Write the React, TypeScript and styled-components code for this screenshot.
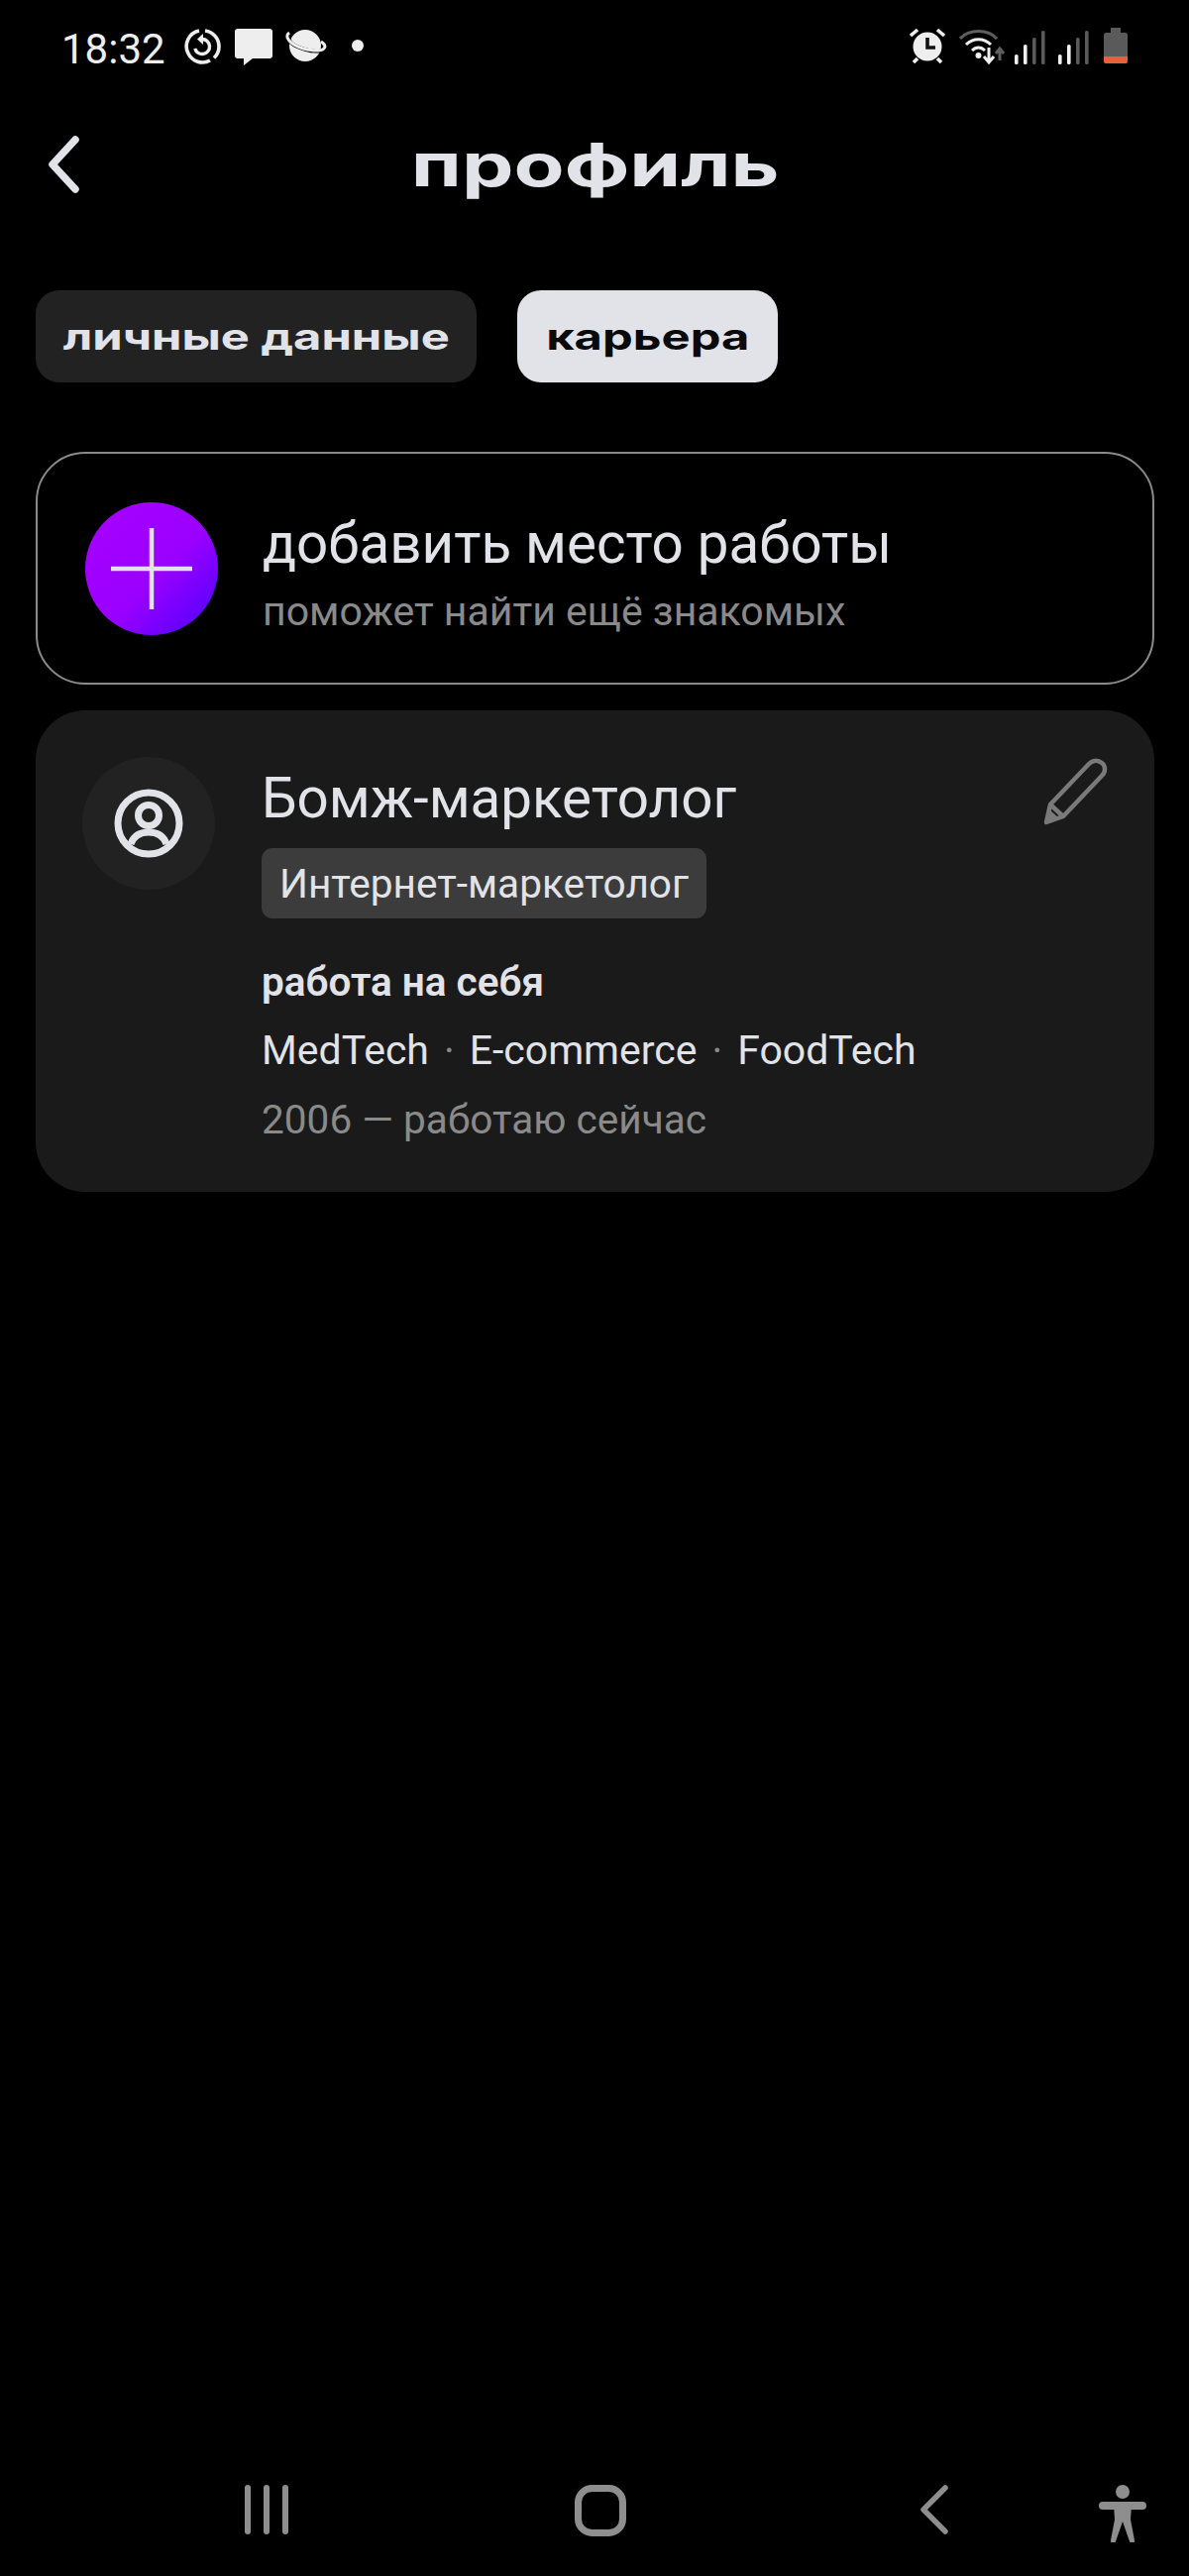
import styled, { createGlobalStyle } from "styled-components";

const GlobalStyle = createGlobalStyle`
  html, body {
    margin: 0;
    padding: 0;
    background: #000;
  }
  * {
    box-sizing: border-box;
  }
`;

const Page = styled.div`
  width: 1200px;
  height: 2600px;
  background: #000;
  color: #e1e3e8;
  font-family: Roboto, "Noto Sans", sans-serif;
  display: flex;
  flex-direction: column;
`;

const StatusBar = styled.div`
  height: 66px;
  padding: 28px 62px 0 64px;
  display: flex;
  justify-content: space-between;
  align-items: flex-start;
`;

const StatusGroup = styled.div`
  display: flex;
  align-items: flex-start;
`;

const Time = styled.span`
  font-size: 42px;
  line-height: 42px;
  margin-top: 1px;
  margin-right: 19px;
  margin-left: -2px;
  color: #eee;
`;

const Header = styled.header`
  height: 72px;
  margin-top: 64px;
  padding: 0 49px;
  display: grid;
  grid-template-columns: 1fr auto 1fr;
  align-items: center;
`;

const BackButton = styled.svg`
  width: 31px;
  height: 58px;
`;

const Title = styled.h1`
  margin: 0;
  font-family: Inter, sans-serif;
  font-size: 60px;
  line-height: 72px;
  font-weight: 700;
  display: inline-block;
  transform: translateX(1px) scaleX(1.39);
  color: #e1e3e8;
`;

const Tabs = styled.nav`
  margin-top: 91px;
  padding: 0 36px;
  display: flex;
  gap: 41px;
`;

const Tab = styled.div<{ $active?: boolean }>`
  height: 93px;
  width: ${(p) => (p.$active ? "263px" : "445px")};
  border-radius: 24px;
  background: ${(p) => (p.$active ? "#e1e3e8" : "#222222")};
  color: ${(p) => (p.$active ? "#0a0a0a" : "#e1e3e8")};
  display: flex;
  align-items: center;
  justify-content: center;
  overflow: hidden;
`;

const TabLabel = styled.span`
  font-family: Inter, sans-serif;
  font-size: 37px;
  font-weight: 700;
  display: inline-block;
  transform: scaleX(1.32);
  white-space: nowrap;
`;

const Cards = styled.div`
  margin: 70px 35px 0 36px;
  display: flex;
  flex-direction: column;
  gap: 26px;
`;

const AddCard = styled.div`
  height: 235px;
  border: 2px solid #8a8a8a;
  border-radius: 50px;
  padding: 0 48px;
  display: flex;
  align-items: center;
  gap: 45px;
`;

const PlusCircle = styled.div`
  width: 134px;
  height: 134px;
  flex: none;
  border-radius: 50%;
  background: linear-gradient(135deg, #a800ff 0%, #9a00ff 55%, #4a00ff 100%);
  display: flex;
  align-items: center;
  justify-content: center;
`;

const AddText = styled.div`
  padding-top: 12px;
`;

const CardHeading = styled.div`
  font-size: 56.5px;
  line-height: 62px;
  color: #e1e3e8;
`;

const CardHint = styled.div`
  font-size: 41px;
  line-height: 50px;
  margin-top: 12px;
  color: #8a8a8a;
`;

const JobCard = styled.div`
  height: 486px;
  background: #1a1a1a;
  border-radius: 50px;
  padding: 47px 48px 0 47px;
  display: flex;
  position: relative;
`;

const JobIcon = styled.div`
  width: 134px;
  height: 134px;
  flex: none;
  border-radius: 50%;
  background: #222222;
  display: flex;
  align-items: center;
  justify-content: center;
  margin-right: 47px;
`;

const JobBody = styled.div`
  display: flex;
  flex-direction: column;
  align-items: flex-start;
`;

const JobTitle = styled.div`
  font-size: 56.5px;
  line-height: 62px;
  margin-top: 11px;
  color: #e1e3e8;
`;

const Tag = styled.div`
  margin-top: 19px;
  height: 71px;
  padding: 0 18px;
  border-radius: 11px;
  background: #3c3c3c;
  font-size: 40.6px;
  display: flex;
  align-items: center;
  color: #e1e3e8;
`;

const JobKind = styled.div`
  margin-top: 42px;
  font-size: 40.5px;
  line-height: 44px;
  font-weight: 600;
  color: #e1e3e8;
`;

const JobTags = styled.div`
  margin-top: 24px;
  font-size: 41px;
  line-height: 46px;
  color: #e1e3e8;
  display: flex;
  gap: 15px;
`;

const Sep = styled.span`
  color: #8a8a8a;
`;

const JobDates = styled.div`
  margin-top: 24px;
  font-size: 40.6px;
  line-height: 46px;
  color: #8a8a8a;
`;

const EditIcon = styled.svg`
  position: absolute;
  top: 48px;
  right: 46px;
  width: 66px;
  height: 68px;
`;

const NavBar = styled.div`
  margin-top: auto;
  height: 120px;
  padding: 28px 44px 0 246px;
  display: flex;
  align-items: flex-start;
`;

const NavIcon = styled.svg<{ $left: number }>`
  margin-left: ${(p) => p.$left}px;
  flex: none;
`;

const StatusIcon = styled.svg<{ $left: number; $top?: number }>`
  margin-left: ${(p) => p.$left}px;
  margin-top: ${(p) => p.$top ?? 0}px;
  flex: none;
`;

const Signal = () => (
  <>
    <rect x="0" y="24" width="3.6" height="10" rx="1.6" fill="#f0f0f0" />
    <rect x="9" y="14" width="3.6" height="20" rx="1.6" fill="#f0f0f0" />
    <rect x="18" y="7" width="3.6" height="27" rx="1.6" fill="#5a5a5a" />
    <rect x="27" y="0" width="3.6" height="34" rx="1.6" fill="#5a5a5a" />
  </>
);

export default function App() {
  return (
    <Page>
      <GlobalStyle />
      <StatusBar>
        <StatusGroup>
          <Time>18:32</Time>
          <StatusIcon $left={0} width="38" height="38" viewBox="0 0 38 38" fill="none">
            <path d="M21 3a16 16 0 0 1 14 16 16 16 0 0 1-5 11.5" stroke="#eee" strokeWidth="3.6" />
            <path d="M26 33a16 16 0 0 1-22-7A16 16 0 0 1 15 3" stroke="#eee" strokeWidth="3.6" />
            <path d="M18 11.5a7.5 7.5 0 1 1-7.2 9.5" stroke="#eee" strokeWidth="3.4" />
            <path d="M19 6v11l-6-5.5z" fill="#eee" />
          </StatusIcon>
          <StatusIcon $left={13} $top={1} width="38" height="37" viewBox="0 0 38 37">
            <path d="M3 0h32a3 3 0 0 1 3 3v24a3 3 0 0 1-3 3H18l-9 7v-7H3a3 3 0 0 1-3-3V3a3 3 0 0 1 3-3z" fill="#eee" />
          </StatusIcon>
          <StatusIcon $left={13} $top={2} width="42" height="33" viewBox="0 0 42 33" fill="none">
            <circle cx="20" cy="16" r="16" fill="#eee" />
            <path d="M4 8c-1 5 6 9 16 12 10 3 18 2 19-1" stroke="#000" strokeWidth="3.5" />
            <path d="M4 3C-2 7 5 15 18 19c12 3 21 3 22-2 0-2-1-3-4-5" stroke="#eee" strokeWidth="3" />
          </StatusIcon>
          <StatusIcon $left={25} $top={12} width="12" height="12" viewBox="0 0 12 12">
            <circle cx="6" cy="6" r="6" fill="#eee" />
          </StatusIcon>
        </StatusGroup>
        <StatusGroup>
          <StatusIcon $left={0} width="38" height="36" viewBox="0 0 38 36" fill="none">
            <circle cx="19" cy="19" r="14.5" fill="#eee" />
            <path d="M19 10v10h8" stroke="#111" strokeWidth="3.6" />
            <path d="M2 8l7-6M36 8l-7-6M9 31l-4 4M29 31l4 4" stroke="#eee" strokeWidth="3.6" />
          </StatusIcon>
          <StatusIcon $left={13} width="48" height="38" viewBox="0 0 48 38" fill="none">
            <path d="M1 11C10 1 29 1 38 11" stroke="#5f5f5f" strokeWidth="3" />
            <path d="M7 17c7-7 18-7 25 0" stroke="#f0f0f0" strokeWidth="3" />
            <path d="M13 23c4-4 9-4 13 0" stroke="#f0f0f0" strokeWidth="3" />
            <circle cx="19.5" cy="28" r="3" fill="#f0f0f0" />
            <path d="M30 20v14M25 29l5 6 5-6" stroke="#f0f0f0" strokeWidth="3" />
            <path d="M41 33V21M37 26l4-5 4 5" stroke="#5f5f5f" strokeWidth="3" />
          </StatusIcon>
          <StatusIcon $left={8} $top={3} width="31" height="34" viewBox="0 0 31 34">
            <Signal />
          </StatusIcon>
          <StatusIcon $left={13} $top={3} width="31" height="34" viewBox="0 0 31 34">
            <Signal />
          </StatusIcon>
          <StatusIcon $left={15} width="24" height="36" viewBox="0 0 24 36">
            <path d="M7 0h10v5H7z" fill="#5a5a5a" />
            <rect x="0" y="5" width="24" height="31" rx="2.5" fill="#5a5a5a" />
            <path d="M0 29h24v4.5a2.5 2.5 0 0 1-2.5 2.5h-19A2.5 2.5 0 0 1 0 33.5z" fill="#e8603c" />
          </StatusIcon>
        </StatusGroup>
      </StatusBar>

      <Header>
        <BackButton viewBox="0 0 31 58" fill="none">
          <path d="M27 4L4 29l23 25" stroke="#e1e3e8" strokeWidth="7.5" strokeLinecap="round" strokeLinejoin="round" />
        </BackButton>
        <Title>профиль</Title>
      </Header>

      <Tabs>
        <Tab>
          <TabLabel>личные данные</TabLabel>
        </Tab>
        <Tab $active>
          <TabLabel>карьера</TabLabel>
        </Tab>
      </Tabs>

      <Cards>
        <AddCard>
          <PlusCircle>
            <svg width="82" height="82" viewBox="0 0 82 82">
              <path d="M41 0v82M0 41h82" stroke="#e1e3e8" strokeWidth="4.5" />
            </svg>
          </PlusCircle>
          <AddText>
            <CardHeading>добавить место работы</CardHeading>
            <CardHint>поможет найти ещё знакомых</CardHint>
          </AddText>
        </AddCard>

        <JobCard>
          <JobIcon>
            <svg width="70" height="70" viewBox="0 0 70 70" fill="none">
              <circle cx="35" cy="35" r="31" stroke="#e1e3e8" strokeWidth="7" />
              <circle cx="35" cy="27" r="10.5" stroke="#e1e3e8" strokeWidth="7" />
              <path d="M17 56c3-9 10-12 18-12s15 3 18 12" stroke="#e1e3e8" strokeWidth="7" />
            </svg>
          </JobIcon>
          <JobBody>
            <JobTitle>Бомж-маркетолог</JobTitle>
            <Tag>Интернет-маркетолог</Tag>
            <JobKind>работа на себя</JobKind>
            <JobTags>
              <span>MedTech</span>
              <Sep>·</Sep>
              <span>E-commerce</span>
              <Sep>·</Sep>
              <span>FoodTech</span>
            </JobTags>
            <JobDates>2006 — работаю сейчас</JobDates>
          </JobBody>
          <EditIcon viewBox="0 0 66 68" fill="none">
            <path
              d="M3 65l4-18L46 6c4-4 9-4 13-1s4 9 0 13L20 59zM7 47l13 12"
              stroke="#7a7a7a"
              strokeWidth="4.5"
              strokeLinejoin="round"
            />
            <path d="M3 65l3-13 10 9z" fill="#7a7a7a" />
          </EditIcon>
        </JobCard>
      </Cards>

      <NavBar>
        <NavIcon $left={0} width="46" height="50" viewBox="0 0 46 50">
          <path d="M4 3v44M23 3v44M42 3v44" stroke="#8e8e8e" strokeWidth="6" strokeLinecap="round" />
        </NavIcon>
        <NavIcon $left={288} width="52" height="52" viewBox="0 0 52 52" fill="none">
          <rect x="3.5" y="3.5" width="45" height="45" rx="14" stroke="#8e8e8e" strokeWidth="7" />
        </NavIcon>
        <NavIcon $left={296} width="30" height="50" viewBox="0 0 30 50" fill="none">
          <path d="M26 3L4 25l22 22" stroke="#8e8e8e" strokeWidth="5.5" strokeLinecap="round" strokeLinejoin="round" />
        </NavIcon>
        <NavIcon $left={151} width="48" height="58" viewBox="0 0 48 58">
          <ellipse cx="24" cy="7" rx="7" ry="7" fill="#8e8e8e" />
          <rect x="0" y="17" width="48" height="8" rx="4" fill="#8e8e8e" />
          <path d="M15 20h18l-1 15 4 21a2.5 2.5 0 0 1-5 1l-7-20-7 20a2.5 2.5 0 0 1-5-1l4-21z" fill="#8e8e8e" />
        </NavIcon>
      </NavBar>
    </Page>
  );
}
